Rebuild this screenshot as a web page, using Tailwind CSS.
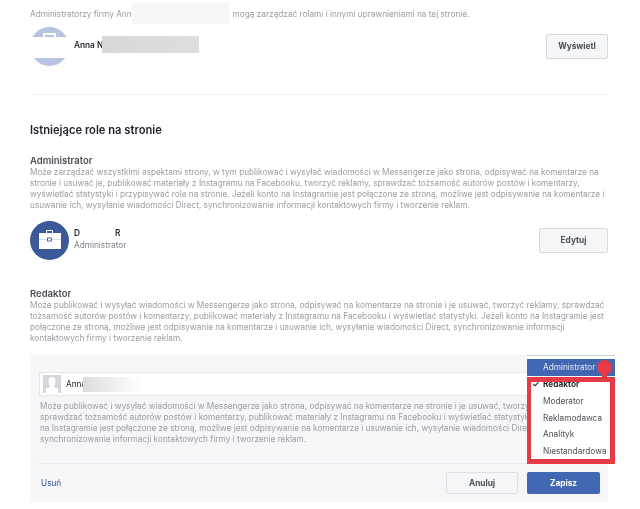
<!DOCTYPE html>
<html lang="pl">
<head>
    <meta charset="UTF-8">
    <title>Role na stronie</title>
    <script src="https://cdn.jsdelivr.net/npm/@tailwindcss/browser@4"></script>
</head>
<body class="bg-white overflow-hidden">
<div class="relative w-[640px] h-[509px] overflow-hidden font-['Inter','Liberation_Sans',sans-serif] text-[8.25px] leading-[11px] text-[#9a9da3] whitespace-nowrap blur-[0.45px]">
    <main class="ml-[30px] w-[578px] pt-[9px]">
        <!-- administratorzy firmy -->
        <p>Administratorzy firmy Ann<span class="inline-block w-[101px]"></span>mogą zarządzać rolami i innymi uprawnieniami na tej stronie.</p>
        <div class="flex items-center mt-[7px]">
            <svg class="w-[39px] h-[39px]" viewBox="0 0 39 39">
                <circle cx="19.5" cy="19.5" r="19.5" fill="#b9c5e0"/>
                <rect x="0" y="10" width="39" height="21" fill="#fff"/>
                <path d="M14 10v-3h11v3" fill="none" stroke="#fff" stroke-width="2"/>
            </svg>
            <span class="ml-[5px] mb-[3px] text-[#1d2129] font-semibold">Anna N</span>
            <button class="ml-auto w-[62px] h-[25px] border border-[#d6d9dd] rounded-[2px] bg-[#f5f6f7] text-[#4b4f56] font-bold">Wyświetl</button>
        </div>

        <hr class="mt-[28px] border-[#f0f1f2]">

        <h2 class="mt-[28px] text-[11.2px] leading-[14px] font-semibold text-[#1d2129]">Istniejące role na stronie</h2>

        <!-- administrator -->
        <h3 class="mt-[18px] text-[9.5px] leading-[11px] font-semibold text-[#4b4f56]">Administrator</h3>
        <p class="mt-px">Może zarządzać wszystkimi aspektami strony, w tym publikować i wysyłać wiadomości w Messengerze jako strona, odpisywać na komentarze na<br>stronie i usuwać je, publikować materiały z Instagramu na Facebooku, tworzyć reklamy, sprawdzać tożsamość autorów postów i komentarzy,<br>wyświetlać statystyki i przypisywać role na stronie. Jeżeli konto na Instagramie jest połączone ze stroną, możliwe jest odpisywanie na komentarze i<br>usuwanie ich, wysyłanie wiadomości Direct, synchronizowanie informacji kontaktowych firmy i tworzenie reklam.</p>
        <div class="flex items-center mt-[10px]">
            <svg class="w-[39px] h-[39px]" viewBox="0 0 39 39">
                <circle cx="19.5" cy="19.5" r="19.5" fill="#3b5998"/>
                <path d="M16.500 12v-2.500h6v2.500" fill="none" stroke="#fff" stroke-width="1"/>
                <rect x="9" y="12" width="22" height="16" fill="#fff"/>
                <path d="M9 18.500h22" stroke="#b9c5e0" stroke-width="0.6"/>
                <rect x="17.500" y="17" width="4" height="3" fill="#fff" stroke="#3b5998" stroke-width="0.9"/>
            </svg>
            <div class="ml-[5px] mb-[4px]">
                <div class="text-[#1d2129] font-semibold leading-[12px]">D<span class="ml-[35px]">R</span></div>
                <div class="leading-[12px] text-[#7f8389]">Administrator</div>
            </div>
            <button class="ml-auto w-[69px] h-[25px] border border-[#d6d9dd] rounded-[2px] bg-[#f5f6f7] text-[#4b4f56] font-bold">Edytuj</button>
        </div>

        <!-- redaktor -->
        <h3 class="mt-[28px] text-[9.5px] leading-[11px] font-semibold text-[#4b4f56]">Redaktor</h3>
        <p class="mt-px">Może publikować i wysyłać wiadomości w Messengerze jako strona, odpisywać na komentarze na stronie i je usuwać, tworzyć reklamy, sprawdzać<br>tożsamość autorów postów i komentarzy, publikować materiały z Instagramu na Facebooku i wyświetlać statystyki. Jeżeli konto na Instagramie jest<br>połączone ze stroną, możliwe jest odpisywanie na komentarze i usuwanie ich, wysyłanie wiadomości Direct, synchronizowanie informacji<br>kontaktowych firmy i tworzenie reklam.</p>

        <!-- panel edycji -->
        <section class="mt-[11px] ml-px h-[147px] bg-[#f5f6f7] px-[8px] pt-[17px]">
            <div class="flex items-center h-[24px] pl-[3px] border border-[#e4e6e9] bg-white text-[#1d2129]">
                <svg class="w-[18px] h-[18px]" viewBox="0 0 18 18">
                    <rect width="18" height="18" fill="#d3d6db"/>
                    <path d="M5.500 6a3.500 4 0 0 1 7 0q0 3-1.500 5q0 1.500 4 2.500v4.500h-12v-4.500q4-1 4-2.500q-1.500-2-1.500-5z" fill="#fff"/>
                </svg>
                <span class="ml-[5px]">Anna</span>
            </div>
            <p class="mt-[5px] ml-px">Może publikować i wysyłać wiadomości w Messengerze jako strona, odpisywać na komentarze na stronie i je usuwać, tworzyć reklamy,<br>sprawdzać tożsamość autorów postów i komentarzy, publikować materiały z Instagramu na Facebooku i wyświetlać statystyki. Jeżeli konto<br>na Instagramie jest połączone ze stroną, możliwe jest odpisywanie na komentarze i usuwanie ich, wysyłanie wiadomości Direct,<br>synchronizowanie informacji kontaktowych firmy i tworzenie reklam.</p>
            <hr class="mt-[18px] border-[#e9ebee]">
            <div class="flex items-center mt-[8px]">
                <a class="ml-[2px] text-[#365899]">Usuń</a>
                <button class="ml-auto w-[72px] h-[22px] border border-[#dddfe2] rounded-[2px] bg-[#f5f6f7] text-[#4b4f56] font-bold">Anuluj</button>
                <button class="ml-[9px] w-[73px] h-[22px] rounded-[2px] bg-[#4267b2] text-white font-bold">Zapisz</button>
            </div>
        </section>
    </main>

    <!-- zamazane fragmenty -->
    <div class="absolute left-[132px] top-[2px] w-[97px] h-[22px] bg-[#f6f7f7]"></div>
    <div class="absolute left-[102px] top-[36px] w-[97px] h-[17px] bg-gradient-to-r from-[#d8d8d8] to-[#dedede]"></div>
    <div class="absolute left-[83px] top-[377px] w-[58px] h-[15px] bg-gradient-to-r from-[#dcdcdc] to-white"></div>

    <!-- lista ról -->
    <div class="absolute left-[527px] top-[355px] w-[88px] h-[108px] bg-white border-t border-[#ccd0d5]">
        <div class="h-[17px] mt-[3px] pl-[16px] bg-[#4267b2] text-[#dfe5f2] leading-[17px]">Administrator</div>
        <ul class="h-[87px] mt-px border-y-[5px] border-l-[4px] border-r-[5px] border-[#e63b46] pl-[12px] text-[#4b4f56] bg-white overflow-hidden">
            <li class="relative h-[16.75px] -mt-[6px] leading-[16.75px] font-bold text-[#1d2129]"><span class="absolute -left-[11px] top-0">✓</span>Redaktor</li>
            <li class="h-[16.75px] leading-[16.75px]">Moderator</li>
            <li class="h-[16.75px] leading-[16.75px]">Reklamodawca</li>
            <li class="h-[16.75px] leading-[16.75px]">Analityk</li>
            <li class="h-[16.75px] leading-[16.75px]">Niestandardowa</li>
        </ul>
        <div class="absolute left-[70px] top-[4px] w-[15px] h-[15px] rounded-full bg-[#e63b46]"></div>
        <div class="absolute left-[75px] top-[15px] w-[5px] h-[8px] bg-[#e63b46]"></div>
    </div>
</div>
</body>
</html>
